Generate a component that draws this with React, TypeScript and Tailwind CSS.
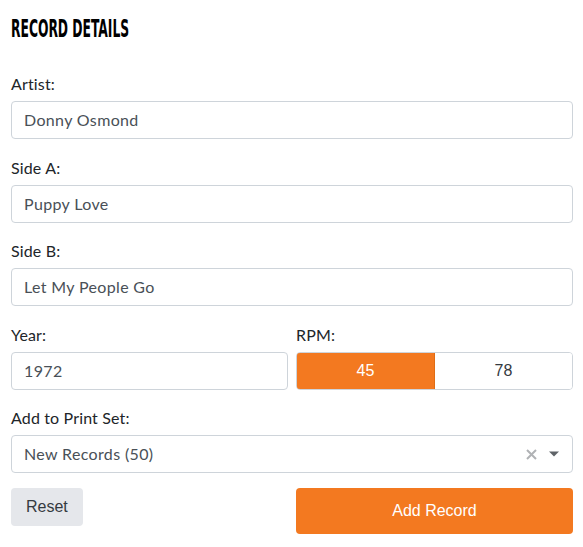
import React from "react";

const body = { fontFamily: "Lato, 'Open Sans', sans-serif" };
const arial = { fontFamily: "'Liberation Sans', Arial, sans-serif" };

function Field({ label, value }: { label: string; value: string }) {
  return (
    <div className="flex flex-col">
      <label className="text-[16px] leading-5 mb-[7px] text-[#212529] tracking-[0.15px]">{label}</label>
      <div className="h-[38px] border border-[#ced4da] rounded-[4px] px-3 flex items-center text-[16px] text-[#495057] tracking-[0.35px]">
        {value}
      </div>
    </div>
  );
}

export default function App() {
  return (
    <div className="w-[583px] h-[547px] bg-white pl-[11px] pr-[10px] pt-4" style={body}>
      <h2
        className="text-[24px] leading-6 font-bold text-black uppercase mb-[34px] origin-left scale-x-[0.57] translate-y-[1px] whitespace-nowrap"
        style={{ fontFamily: "'DejaVu Sans Condensed', sans-serif" }}
      >
        Record Details
      </h2>
      <div className="flex flex-col gap-[18.5px]">
        <Field label="Artist:" value="Donny Osmond" />
        <Field label="Side A:" value="Puppy Love" />
        <Field label="Side B:" value="Let My People Go" />
        <div className="grid grid-cols-2 gap-2">
          <Field label="Year:" value="1972" />
          <div className="flex flex-col">
            <label className="text-[16px] leading-5 mb-[7px] text-[#212529] tracking-[0.15px]">RPM:</label>
            <div className="h-[38px] flex rounded-[4px] border border-[#ced4da] overflow-hidden text-[16px]" style={arial}>
              <div className="flex-1 -my-px -ml-px bg-[#f37920] border border-[#e06d15] rounded-l-[4px] text-white flex items-center justify-center">
                45
              </div>
              <div className="flex-1 flex items-center justify-center text-[#343a40] bg-white">78</div>
            </div>
          </div>
        </div>
        <div className="flex flex-col">
          <label className="text-[16px] leading-5 mb-[7px] text-[#212529] tracking-[0.15px]">Add to Print Set:</label>
          <div className="h-[38px] border border-[#ced4da] rounded-[4px] pl-3 pr-[13px] flex items-center text-[16px] text-[#495057] tracking-[0.35px]">
            <span className="flex-1">New Records (50)</span>
            <svg width="11" height="11" viewBox="0 0 11 11" className="mr-[12px]">
              <path d="M1 1 L10 10 M10 1 L1 10" stroke="#b0b2b5" strokeWidth="2" />
            </svg>
            <svg width="10" height="6" viewBox="0 0 10 6">
              <path d="M0 0.5 L10 0.5 L5 5.5 Z" fill="#5f6368" />
            </svg>
          </div>
        </div>
      </div>
      <div className="grid grid-cols-2 gap-2 mt-[15px] items-start" style={arial}>
        <div>
          <button className="h-[38px] px-[15px] rounded-[4px] bg-[#e5e7eb] text-[16px] text-[#343a40]">Reset</button>
        </div>
        <button className="h-[46px] w-full rounded-[4px] bg-[#f37920] text-white text-[16px]">Add Record</button>
      </div>
    </div>
  );
}
